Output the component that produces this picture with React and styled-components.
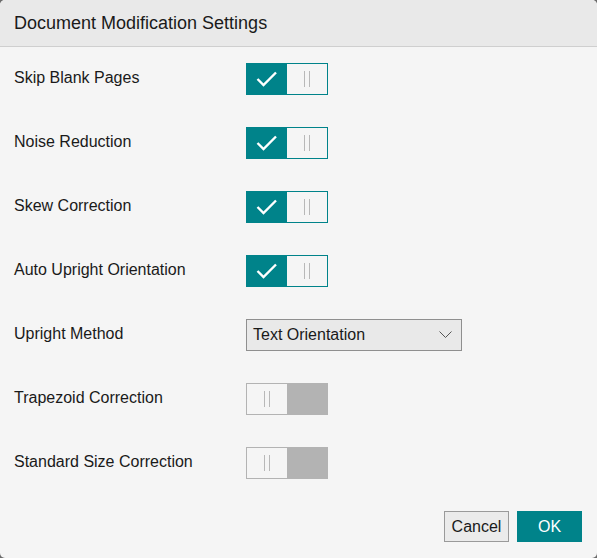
import React from 'react'
import styled, { createGlobalStyle } from 'styled-components'

const Global = createGlobalStyle`
  html, body {
    margin: 0;
    padding: 0;
    background: #6b6b6b;
  }
  body {
    font-family: "Liberation Sans", Arial, sans-serif;
  }
`

const Dialog = styled.div`
  width: 597px;
  height: 558px;
  background: #f5f5f5;
  border-radius: 5px;
  overflow: hidden;
  display: flex;
  flex-direction: column;
`

const Header = styled.div`
  height: 46px;
  background: #e9e9e9;
  border-bottom: 1px solid #cfcfcf;
  display: flex;
  align-items: center;
  padding-left: 14px;
  font-size: 18px;
  color: #1a1a1a;
`

const Body = styled.div`
  display: flex;
  flex-direction: column;
`

const Row = styled.div`
  height: 64px;
  display: flex;
  align-items: center;
`

const Label = styled.div`
  width: 246px;
  padding-left: 14px;
  box-sizing: border-box;
  font-size: 16px;
  color: #1a1a1a;
  margin-top: -2px;
`

const Toggle = styled.div`
  width: 82px;
  height: 32px;
  box-sizing: border-box;
  border: 1px solid ${p => (p.on ? '#00838a' : '#b3b3b3')};
  display: flex;
  margin-top: -1px;
`

const Half = styled.div`
  flex: 1;
  display: flex;
  align-items: center;
  justify-content: center;
  background: ${p => p.bg};
`

const Grip = styled.div`
  width: 4px;
  height: 16px;
  border-left: 1px solid #b8b8b8;
  border-right: 1px solid #b8b8b8;
`

const Select = styled.div`
  width: 216px;
  height: 32px;
  box-sizing: border-box;
  border: 1px solid #8f8f8f;
  background: #e9e9e9;
  display: flex;
  align-items: center;
  justify-content: space-between;
  padding: 0 9px 0 6px;
  font-size: 16px;
  color: #1a1a1a;
  margin-top: -1px;
`

const Footer = styled.div`
  display: flex;
  justify-content: flex-end;
  gap: 8px;
  padding: 16px 15px 0 0;
`

const Button = styled.button`
  width: 65px;
  height: 31px;
  box-sizing: border-box;
  font-family: "Liberation Sans", Arial, sans-serif;
  font-size: 16px;
  border: 1px solid ${p => (p.primary ? '#00838a' : '#9a9a9a')};
  background: ${p => (p.primary ? '#00838a' : '#ebebeb')};
  color: ${p => (p.primary ? '#ffffff' : '#1a1a1a')};
  padding: 0;
`

const Check = () => (
  <svg width="22" height="16" viewBox="0 0 22 16">
    <path d="M1.5 8 L7.5 14 L20 1.5" fill="none" stroke="#fff" strokeWidth="2.4" />
  </svg>
)

const Switch = ({ on }) =>
  on ? (
    <Toggle on>
      <Half bg="#00838a"><Check /></Half>
      <Half bg="#f5f5f5"><Grip /></Half>
    </Toggle>
  ) : (
    <Toggle>
      <Half bg="#f5f5f5"><Grip /></Half>
      <Half bg="#b3b3b3" />
    </Toggle>
  )

const rows = [
  ['Skip Blank Pages', true],
  ['Noise Reduction', true],
  ['Skew Correction', true],
  ['Auto Upright Orientation', true],
]

export default function App() {
  return (
    <>
      <Global />
      <Dialog>
        <Header>Document Modification Settings</Header>
        <Body>
          {rows.map(([label, on]) => (
            <Row key={label}>
              <Label>{label}</Label>
              <Switch on={on} />
            </Row>
          ))}
          <Row>
            <Label>Upright Method</Label>
            <Select>
              Text Orientation
              <svg width="13" height="8" viewBox="0 0 13 8">
                <path d="M0.5 0.5 L6.5 6.5 L12.5 0.5" fill="none" stroke="#555" strokeWidth="1" />
              </svg>
            </Select>
          </Row>
          <Row>
            <Label>Trapezoid Correction</Label>
            <Switch />
          </Row>
          <Row>
            <Label>Standard Size Correction</Label>
            <Switch />
          </Row>
        </Body>
        <Footer>
          <Button>Cancel</Button>
          <Button primary>OK</Button>
        </Footer>
      </Dialog>
    </>
  )
}
